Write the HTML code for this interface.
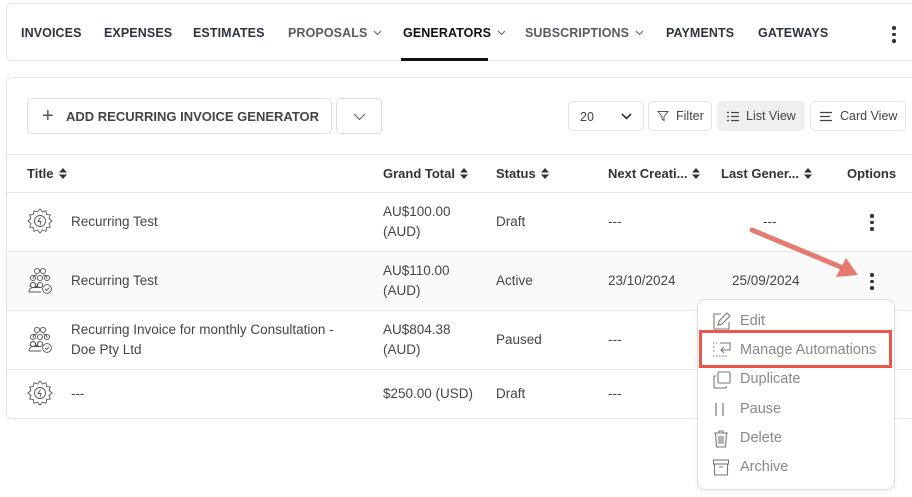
<!DOCTYPE html>
<html><head><style>
*{box-sizing:border-box;margin:0;padding:0}
body{width:912px;height:497px;background:#fff;font-family:"Liberation Sans",Arial,sans-serif;position:relative;overflow:hidden;color:#333}
.abs{position:absolute}
.nav{left:6px;top:3px;width:920px;height:58px;border:1px solid #e6e6e6;border-radius:6px;background:#fff}
.ni{position:absolute;top:26px;font-size:12.5px;font-weight:bold;color:#2b3440;letter-spacing:.1px}
.ni.g{color:#555c66}
.ni svg{margin-left:6px;vertical-align:middle;position:relative;top:-1px}
.card{left:6px;top:77px;width:920px;height:342px;border:1px solid #e6e6e6;border-radius:6px;background:#fff}
.btn{position:absolute;border:1px solid #dcdcdc;border-radius:5px;background:#fff;font-size:12.5px;color:#444}
.hl{position:absolute;left:7px;width:905px;height:1px;background:#e8e8e8}
.th{position:absolute;top:166px;font-size:13px;font-weight:bold;color:#333}
.td{position:absolute;font-size:13.5px;color:#444;line-height:20px}
.sort{display:inline-block;vertical-align:middle;margin-left:5px;width:8px;height:11px;position:relative;top:-1px}
.menu{left:697px;top:299px;width:198px;height:191px;border:1px solid #ddd;border-radius:8px;background:#fff;box-shadow:0 2px 6px rgba(0,0,0,.05)}
.mi{position:absolute;left:740px;font-size:14.5px;color:#888}
.dots{position:absolute;width:4px}
.dots i{display:block;width:3.5px;height:3.5px;border-radius:50%;background:#333;margin-bottom:3px}
</style></head><body>
<div class="abs nav"></div>
<div class="ni" style="left:21px">INVOICES</div>
<div class="ni" style="left:104px">EXPENSES</div>
<div class="ni" style="left:193px">ESTIMATES</div>
<div class="ni g" style="left:288px">PROPOSALS<svg width="9" height="6"><path d="M1 1l3.5 3.5L8 1" fill="none" stroke="#666" stroke-width="1.1"/></svg></div>
<div class="ni" style="left:403px;color:#111">GENERATORS<svg width="9" height="6"><path d="M1 1l3.5 3.5L8 1" fill="none" stroke="#666" stroke-width="1.1"/></svg></div>
<div class="abs" style="left:401px;top:58px;width:87px;height:3px;background:#111"></div>
<div class="ni g" style="left:525px">SUBSCRIPTIONS<svg width="9" height="6"><path d="M1 1l3.5 3.5L8 1" fill="none" stroke="#666" stroke-width="1.1"/></svg></div>
<div class="ni" style="left:666px">PAYMENTS</div>
<div class="ni" style="left:758px">GATEWAYS</div>
<div class="dots" style="left:892px;top:26px"><i></i><i></i><i></i></div>

<div class="abs card"></div>
<div class="btn" style="left:27px;top:98px;width:305px;height:36px"><span style="position:absolute;left:14px;top:6px;font-size:20px;color:#555;font-weight:normal">+</span><span style="position:absolute;left:38px;top:10px;font-size:13px;font-weight:bold;color:#444">ADD RECURRING INVOICE GENERATOR</span></div>
<div class="btn" style="left:336px;top:98px;width:46px;height:36px"><svg class="abs" style="left:16px;top:14px" width="13" height="8"><path d="M1 1l5.5 5.5L12 1" fill="none" stroke="#666" stroke-width="1.1"/></svg></div>
<div class="btn" style="left:568px;top:101px;width:76px;height:30px;border-color:#e6e6e6"><span style="position:absolute;left:11px;top:8px">20</span><svg class="abs" style="left:52px;top:11px" width="11" height="7"><path d="M1 1l4.5 4.5L10 1" fill="none" stroke="#333" stroke-width="1.6"/></svg></div>
<div class="btn" style="left:648px;top:101px;width:64px;height:30px;border-color:#e6e6e6"><svg class="abs" style="left:8px;top:8px" width="12" height="12"><path d="M1 1.5h10L7 6.5v4L5 9V6.5z" fill="none" stroke="#555" stroke-width="1"/></svg><span style="position:absolute;left:27px;top:7px">Filter</span></div>
<div class="btn" style="left:717px;top:101px;width:88px;height:30px;background:#efefef;border-color:#efefef"><svg class="abs" style="left:9px;top:9px" width="12" height="11"><path d="M0 1.5h2M4 1.5h8M0 5.5h2M4 5.5h8M0 9.5h2M4 9.5h8" stroke="#444" stroke-width="1.3"/></svg><span style="position:absolute;left:28px;top:7px">List View</span></div>
<div class="btn" style="left:810px;top:101px;width:96px;height:30px;border-color:#e6e6e6"><svg class="abs" style="left:9px;top:9px" width="12" height="11"><path d="M0 1.5h12M0 5.5h10M0 9.5h12" stroke="#444" stroke-width="1.2"/></svg><span style="position:absolute;left:29px;top:7px">Card View</span></div>

<div class="hl" style="top:154px"></div>
<div class="hl" style="top:192px"></div>
<div class="abs" style="left:7px;top:252px;width:905px;height:58px;background:#fafafa"></div>
<div class="hl" style="top:251px"></div>
<div class="hl" style="top:310px"></div>
<div class="hl" style="top:369px"></div>

<svg width="0" height="0" style="position:absolute"><defs>
<path id="so" d="M4 0L8 4.5H0zM4 11L0 6.5h8z" fill="#333"/>
<g id="gear"><path d="M15 2l2.5 3 3.5-1.3 .6 3.7 3.7.6L24 11.5l3 2.5-3 2.5 1.3 3.5-3.7.6-.6 3.7L17.5 23 15 26l-2.5-3-3.5 1.3-.6-3.7-3.7-.6L6 16.5 3 14l3-2.5-1.3-3.5 3.7-.6.6-3.7L12.5 5z" fill="none" stroke="#555" stroke-width=".9"/><circle cx="15" cy="14" r="5.5" fill="none" stroke="#555" stroke-width=".9"/><path d="M15.5 10.5l-2.5 4h3l-1 3.5" fill="none" stroke="#555" stroke-width=".9"/></g>
<g id="ppl" fill="none" stroke="#555" stroke-width=".9"><circle cx="12" cy="4" r="2.6"/><circle cx="18" cy="4" r="2.6"/><path d="M8 12c0-3 2-4 4-4M22 12c0-3-2-4-4-4"/><circle cx="8" cy="11" r="2.6"/><circle cx="15" cy="11" r="2.6"/><circle cx="22" cy="11" r="2.6"/><path d="M5 20c0-3 1.5-4.5 3-4.5s3 1.5 3 4.5M12 20c0-3 1.5-4.5 3-4.5"/><circle cx="8" cy="18" r="2.6"/><circle cx="15" cy="18" r="2.6"/><path d="M4 25c0-3 2-4.5 4-4.5h8M4 25h12"/><circle cx="22" cy="22" r="4.4"/><path d="M20 22l1.5 1.5 2.6-2.8"/></g>
</defs></svg>

<div class="th" style="left:27px">Title<svg class="sort" viewBox="0 0 8 11"><use href="#so"/></svg></div>
<div class="th" style="left:383px">Grand Total<svg class="sort" viewBox="0 0 8 11"><use href="#so"/></svg></div>
<div class="th" style="left:496px">Status<svg class="sort" viewBox="0 0 8 11"><use href="#so"/></svg></div>
<div class="th" style="left:608px">Next Creati...<svg class="sort" viewBox="0 0 8 11"><use href="#so"/></svg></div>
<div class="th" style="left:721px">Last Gener...<svg class="sort" viewBox="0 0 8 11"><use href="#so"/></svg></div>
<div class="th" style="left:847px">Options</div>

<svg class="abs" style="left:25px;top:207px" width="30" height="30"><use href="#gear"/></svg>
<svg class="abs" style="left:25px;top:267px" width="30" height="30"><use href="#ppl"/></svg>
<svg class="abs" style="left:25px;top:326px" width="30" height="30"><use href="#ppl"/></svg>
<svg class="abs" style="left:25px;top:379px" width="30" height="30"><use href="#gear"/></svg>

<div class="td" style="left:71px;top:212px">Recurring Test</div>
<div class="td" style="left:383px;top:202px">AU$100.00<br>(AUD)</div>
<div class="td" style="left:496px;top:212px">Draft</div>
<div class="td" style="left:608px;top:212px">---</div>
<div class="td" style="left:763px;top:212px">---</div>
<div class="dots" style="left:870px;top:214px"><i></i><i></i><i></i></div>

<div class="td" style="left:71px;top:271px">Recurring Test</div>
<div class="td" style="left:383px;top:261px">AU$110.00<br>(AUD)</div>
<div class="td" style="left:496px;top:271px">Active</div>
<div class="td" style="left:608px;top:271px">23/10/2024</div>
<div class="td" style="left:732px;top:271px">25/09/2024</div>
<div class="dots" style="left:870px;top:273px"><i></i><i></i><i></i></div>

<div class="td" style="left:71px;top:320px">Recurring Invoice for monthly Consultation -<br>Doe Pty Ltd</div>
<div class="td" style="left:383px;top:320px">AU$804.38<br>(AUD)</div>
<div class="td" style="left:496px;top:330px">Paused</div>
<div class="td" style="left:608px;top:330px">---</div>

<div class="td" style="left:71px;top:384px">---</div>
<div class="td" style="left:383px;top:384px">$250.00 (USD)</div>
<div class="td" style="left:496px;top:384px">Draft</div>
<div class="td" style="left:608px;top:384px">---</div>

<svg class="abs" style="left:740px;top:220px" width="130" height="65"><path d="M12 10L108 50" stroke="#e47a70" stroke-width="5" stroke-linecap="round"/><path d="M118 55L96 57L106 38z" fill="#e47a70"/></svg>

<div class="abs menu"></div>
<svg class="abs" style="left:712px;top:312px" width="20" height="20" fill="none" stroke="#777" stroke-width="1.1"><path d="M9 2H2v15h15v-7"/><path d="M15 1l3 3-8 8-4 1 1-4z"/></svg>
<div class="mi" style="top:313px">Edit</div>
<div class="abs" style="left:699px;top:330px;width:193px;height:38px;border:3px solid #e9574b"></div>
<svg class="abs" style="left:712px;top:341px" width="20" height="18" fill="none" stroke="#777" stroke-width="1.1"><path d="M1 2h4M1 6h3M1 10h2M1 15h14" stroke-dasharray="1.5 1.5"/><path d="M8 2h10v7H9M12 6l-3 3 3 3"/></svg>
<div class="mi" style="top:342px">Manage Automations</div>
<svg class="abs" style="left:712px;top:370px" width="20" height="20" fill="none" stroke="#777" stroke-width="1.1"><rect x="6" y="2" width="12" height="11" rx="1"/><path d="M4 6H2v12h12v-2"/></svg>
<div class="mi" style="top:371px">Duplicate</div>
<svg class="abs" style="left:712px;top:401px" width="20" height="18" stroke="#777" stroke-width="1.2"><path d="M4 2v13M11 2v13"/></svg>
<div class="mi" style="top:401px">Pause</div>
<svg class="abs" style="left:712px;top:429px" width="20" height="20" fill="none" stroke="#777" stroke-width="1.1"><path d="M2 4h14M7 4V2h4v2M3.5 4l1 14h9l1-14M7 7v8M9 7v8M11 7v8"/></svg>
<div class="mi" style="top:430px">Delete</div>
<svg class="abs" style="left:712px;top:458px" width="20" height="20" fill="none" stroke="#777" stroke-width="1.1"><rect x="1.5" y="2" width="15" height="4"/><path d="M2.5 6v11h13V6M7 9h4"/></svg>
<div class="mi" style="top:459px">Archive</div>
</body></html>
